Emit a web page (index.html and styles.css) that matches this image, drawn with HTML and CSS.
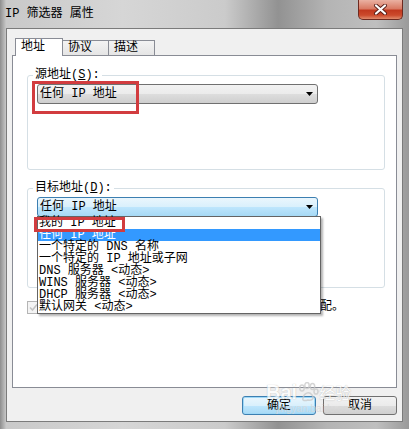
FILE: index.html
```html
<!DOCTYPE html>
<html lang="zh-CN">
<head>
    <meta charset="UTF-8">
    <meta name="viewport" content="width=device-width, initial-scale=1.0">
    <title>IP 筛选器 属性</title>
    <link rel="stylesheet" href="styles.css">
</head>
<body>
    <div class="window">
        <div class="titlebar">
            <span class="title">IP 筛选器 属性</span>
            <div class="close">
                <svg width="17" height="11" viewBox="0 0 17 11">
                    <path d="M4 1.5 L13 9.5 M13 1.5 L4 9.5" stroke="#5a1f18" stroke-width="4" stroke-linecap="round"/>
                    <path d="M4 1.5 L13 9.5 M13 1.5 L4 9.5" stroke="#fff" stroke-width="2.2" stroke-linecap="round"/>
                </svg>
            </div>
        </div>

        <div class="client">
            <div class="tabs">
                <div class="tab active">地址</div>
                <div class="tab">协议</div>
                <div class="tab">描述</div>
            </div>

            <div class="panel">
                <fieldset class="group first">
                    <legend>源地址(<u>S</u>):</legend>
                    <div class="combo">
                        <span>任何 IP 地址</span>
                        <svg class="arrow" width="7" height="4" viewBox="0 0 7 4"><path d="M0 0 H7 L3.5 4 Z" fill="#000"/></svg>
                        <div class="mark mark-source"></div>
                    </div>
                </fieldset>

                <fieldset class="group second">
                    <legend>目标地址(<u>D</u>):</legend>
                    <div class="combo open">
                        <span>任何 IP 地址</span>
                        <svg class="arrow" width="7" height="4" viewBox="0 0 7 4"><path d="M0 0 H7 L3.5 4 Z" fill="#000"/></svg>
                        <ul class="dropdown">
                            <li>我的 IP 地址</li>
                            <li class="selected">任何 IP 地址</li>
                            <li>一个特定的 DNS 名称</li>
                            <li>一个特定的 IP 地址或子网</li>
                            <li>DNS 服务器 &lt;动态&gt;</li>
                            <li>WINS 服务器 &lt;动态&gt;</li>
                            <li>DHCP 服务器 &lt;动态&gt;</li>
                            <li>默认网关 &lt;动态&gt;</li>
                            <div class="mark mark-target"></div>
                        </ul>
                    </div>
                </fieldset>

                <label class="check">
                    <span class="box">
                        <svg width="9" height="9" viewBox="0 0 9 9"><path d="M1 4.5 L3.5 7 L8 1.5" stroke="#c4c4c4" stroke-width="1.6" fill="none"/></svg>
                    </span>
                    镜像。与源地址和目标地址正好相反的数据包也相匹配。
                </label>
            </div>

            <div class="buttons">
                <button class="btn default">确定</button>
                <button class="btn">取消</button>
            </div>
        </div>

        <div class="watermark">
            <span class="wm-bai">Bai</span>
            <svg width="22" height="20" viewBox="0 0 22 20">
                <g fill="none" stroke="#c8c8c8" stroke-width="1.5">
                    <ellipse cx="5" cy="6" rx="2.2" ry="3"/>
                    <ellipse cx="10" cy="3.5" rx="2.2" ry="3"/>
                    <ellipse cx="15.5" cy="4.5" rx="2.2" ry="3"/>
                    <ellipse cx="19" cy="9.5" rx="2" ry="2.6"/>
                    <path d="M6 16 C7 11 12 9 15 13 C18 17 14 19 11 18 C8 19 5 19 6 16 Z"/>
                </g>
            </svg>
            <span class="wm-jy">经验</span>
            <div class="wm-url">jingyan.baidu.com</div>
        </div>
    </div>
</body>
</html>
```

FILE: styles.css
```css
body {
    margin: 0;
    font-family: "Liberation Mono", "Noto Sans CJK SC", monospace;
    font-size: 12px;
    color: #000;
}
.window {
    position: relative;
    width: 409px;
    height: 429px;
    display: flex;
    flex-direction: column;
    background: linear-gradient(90deg, #8e8e8e 0, #c9c9c9 1.5%, #d6d6d6 30%, #cbcbcb 55%, #929292 68%, #b4b4b4 80%, #bfbfbf 92%, #9a9a9a 100%);
    overflow: hidden;
}
.titlebar {
    height: 28px;
    display: flex;
    align-items: flex-start;
    padding: 0 6px 0 5px;
}
.title {
    margin-top: 6px;
    line-height: 16px;
    font-size: 12px;
}
.close {
    margin-left: auto;
    width: 45px;
    height: 20px;
    box-sizing: border-box;
    border: 1px solid #6e2a20;
    border-top: 0;
    border-radius: 0 0 5px 5px;
    background: linear-gradient(#eab1a2 0, #d97a64 45%, #c2391f 55%, #cc4a2c 80%, #e08b6c 100%);
    display: flex;
    align-items: center;
    justify-content: center;
}

.client {
    flex: 1;
    margin: 0 6px 7px 6px;
    border: 1px solid #7b7b7b;
    background: #f0f0f0;
    padding: 9px 5px 6px 5px;
    display: flex;
    flex-direction: column;
}
.tabs {
    display: flex;
    align-items: flex-end;
    padding-left: 3px;
    margin-bottom: -1px;
    position: relative;
    z-index: 1;
}
.tab {
    box-sizing: border-box;
    height: 16px;
    width: 47px;
    margin-left: -1px;
    padding-left: 5px;
    line-height: 14px;
    border: 1px solid #898c95;
    background: linear-gradient(#f3f3f3, #e5e5e5);
}
.tab.active {
    height: 18px;
    width: 48px;
    margin-left: 0;
    border-bottom: 0;
    background: #fff;
    line-height: 16px;
    position: relative;
    z-index: 1;
}

.panel {
    height: 333px;
    box-sizing: border-box;
    background: #fff;
    border: 1px solid #898c95;
    padding: 13px 11px 0 14px;
}
.group {
    margin: 0;
    min-width: 0;
    border: 1px solid #d5dfe5;
    border-radius: 3px;
    padding: 3px 9px 65px;
}
.group.second {
    margin-top: 12px;
    padding-bottom: 70px;
}
.group legend {
    margin-left: -4px;
    padding: 0 2px;
    line-height: 12px;
}
.combo {
    position: relative;
    width: 281px;
    height: 20px;
    box-sizing: border-box;
    border: 1px solid #707070;
    border-radius: 3px;
    background: linear-gradient(#f2f2f2 0, #ebebeb 50%, #dddddd 50%, #cfcfcf 100%);
    display: flex;
    align-items: center;
    padding: 0 4px 0 2px;
    line-height: 12px;
}
.combo.open {
    border-color: #3c7fb1;
    background: linear-gradient(#eaf6fd 0, #d9f0fc 50%, #bee6fd 50%, #a7d9f5 100%);
}
.arrow {
    margin-left: auto;
}
.mark {
    position: absolute;
    border: 3px solid #d23c3f;
    box-sizing: border-box;
}
.mark-source {
    left: -6px;
    top: -4px;
    width: 107px;
    height: 33px;
}
.mark-target {
    left: -4px;
    top: 0;
    width: 91px;
    height: 15px;
}
.dropdown {
    position: absolute;
    left: -1px;
    top: 100%;
    width: 282px;
    margin: 0;
    padding: 0;
    list-style: none;
    background: #fff;
    border: 1px solid #646464;
    box-shadow: 2px 2px 2px rgba(0, 0, 0, 0.3);
    z-index: 2;
}
.dropdown li {
    height: 12px;
    line-height: 12px;
    padding-left: 1px;
    white-space: nowrap;
}
.dropdown li.selected {
    background: #3399ff;
    color: #fff;
}

.check {
    display: flex;
    align-items: center;
    gap: 4px;
    margin-top: 12px;
    line-height: 14px;
    white-space: nowrap;
}
.check .box {
    width: 13px;
    height: 13px;
    box-sizing: border-box;
    border: 1px solid #b5b5b5;
    background: #f4f4f4;
    display: flex;
    align-items: center;
    justify-content: center;
}

.buttons {
    display: flex;
    justify-content: flex-end;
    gap: 7px;
    margin-top: 8px;
}
.btn {
    width: 74px;
    height: 19px;
    box-sizing: border-box;
    border: 1px solid #707070;
    border-radius: 3px;
    background: linear-gradient(#f2f2f2 0, #ebebeb 50%, #dddddd 50%, #cfcfcf 100%);
    font-family: inherit;
    font-size: 12px;
    line-height: 14px;
    padding: 0;
    color: #000;
}
.btn.default {
    border-color: #3c7fb1;
    background: linear-gradient(#eaf6fd 0, #d9f0fc 50%, #bee6fd 50%, #a7d9f5 100%);
    box-shadow: inset 0 0 0 1px #9ed8f7;
}

.watermark {
    position: absolute;
    left: 266px;
    top: 380px;
    display: flex;
    align-items: center;
    opacity: 0.75;
    pointer-events: none;
}
.wm-bai {
    font-family: "Liberation Sans", sans-serif;
    font-size: 20px;
    font-weight: bold;
    color: #fff;
    text-shadow: 0 0 1px #999;
}
.wm-jy {
    font-family: "Noto Sans CJK SC", sans-serif;
    font-size: 16px;
    color: #fff;
    text-shadow: 0 0 1px #999;
}
.wm-url {
    position: absolute;
    left: 10px;
    top: 23px;
    font-family: "Liberation Sans", sans-serif;
    font-size: 10px;
    color: #d8d8d8;
    white-space: nowrap;
}
```
